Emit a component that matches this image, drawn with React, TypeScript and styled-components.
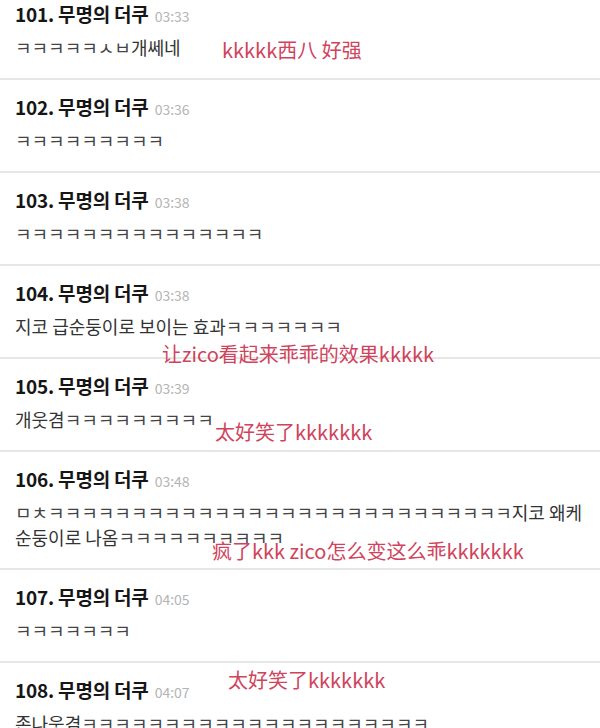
import styled, { createGlobalStyle } from 'styled-components';

const GlobalStyle = createGlobalStyle`
  html, body {
    margin: 0;
    padding: 0;
    background: #fff;
  }
  body {
    font-family: "Noto Sans CJK KR", "Noto Sans", sans-serif;
  }
`;

type Comment = { no: number; time: string; lines: string[] };

const comments: Comment[] = [
  { no: 101, time: '03:33', lines: ['ㅋㅋㅋㅋㅋㅅㅂ개쎄네'] },
  { no: 102, time: '03:36', lines: ['ㅋㅋㅋㅋㅋㅋㅋㅋㅋ'] },
  { no: 103, time: '03:38', lines: ['ㅋㅋㅋㅋㅋㅋㅋㅋㅋㅋㅋㅋㅋㅋㅋ'] },
  { no: 104, time: '03:38', lines: ['지코 급순둥이로 보이는 효과ㅋㅋㅋㅋㅋㅋㅋ'] },
  { no: 105, time: '03:39', lines: ['개웃겸ㅋㅋㅋㅋㅋㅋㅋㅋㅋ'] },
  {
    no: 106,
    time: '03:48',
    lines: ['ㅁㅊ' + 'ㅋ'.repeat(28) + '지코 왜케', '순둥이로 나옴' + 'ㅋ'.repeat(10)],
  },
  { no: 107, time: '04:05', lines: ['ㅋㅋㅋㅋㅋㅋㅋ'] },
  { no: 108, time: '04:07', lines: ['존나웃겸' + 'ㅋ'.repeat(21)] },
];

// red captions written over the screenshot
const notes = [
  { text: 'kkkkk西八 好强', top: 38, left: 222 },
  { text: '让zico看起来乖乖的效果kkkkk', top: 342, left: 162 },
  { text: '太好笑了kkkkkkk', top: 420, left: 215 },
  { text: '疯了kkk zico怎么变这么乖kkkkkkk', top: 539, left: 212 },
  { text: '太好笑了kkkkkkk', top: 668, left: 228 },
];

// bare jamo runs get their own span so they can be tinted
const renderLine = (line: string) =>
  line.split(/([ㄱ-ㅎ]+)/).map((part, i) =>
    /^[ㄱ-ㅎ]+$/.test(part) ? <Jamo key={i}>{part}</Jamo> : <span key={i}>{part}</span>
  );

const App = () => {
  return (
    <Page>
      <GlobalStyle />
      <List>
        {comments.map(c => (
          <Item key={c.no}>
            <Header>
              <Author>{c.no}. 무명의 더쿠</Author>
              <Time>{c.time}</Time>
            </Header>
            <Body>
              {c.lines.map((line, i) => (
                <Line key={i}>{renderLine(line)}</Line>
              ))}
            </Body>
          </Item>
        ))}
      </List>
      {notes.map((n, i) => (
        <Note key={i} $top={n.top} $left={n.left}>
          {n.text}
        </Note>
      ))}
    </Page>
  );
};

const Page = styled.div`
  position: relative;
  width: 600px;
  height: 728px;
  overflow: hidden;
  background: #fff;
`;

const List = styled.div`
  display: flex;
  flex-direction: column;
`;

const Item = styled.div`
  padding: 15px 15px 18px;
  border-bottom: 2px solid #e6e6e6;

  &:first-child {
    padding-top: 2px;
  }
`;

const Header = styled.div`
  display: flex;
  align-items: baseline;
  height: 24px;
  line-height: 24px;
`;

const Author = styled.span`
  font-size: 19px;
  font-weight: 700;
  color: #161616;
  letter-spacing: -0.2px;
`;

const Time = styled.span`
  margin-left: 6px;
  font-size: 14px;
  color: #b4b4b4;
`;

const Body = styled.div`
  margin-top: 9px;
  font-size: 18px;
  line-height: 25px;
  color: #333;
  white-space: nowrap;
`;

const Line = styled.div``;

const Jamo = styled.span`
  color: #444;
`;

const Note = styled.div<{ $top: number; $left: number }>`
  position: absolute;
  top: ${p => p.$top}px;
  left: ${p => p.$left}px;
  font-family: "Noto Sans CJK SC", "Noto Sans", sans-serif;
  font-size: 20px;
  line-height: 24px;
  color: #d0435c;
  white-space: nowrap;
`;

export default App;
